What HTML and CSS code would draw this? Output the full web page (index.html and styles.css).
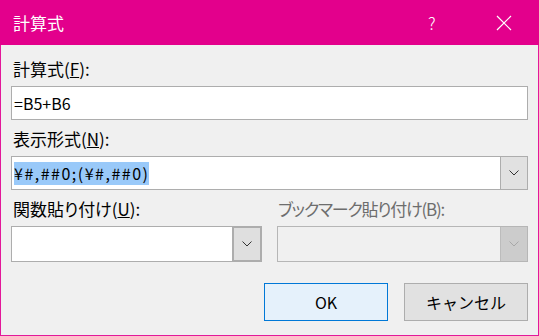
FILE: index.html
```html
<!DOCTYPE html>
<html lang="ja">
<head>
	<meta charset="UTF-8">
	<meta name="viewport" content="width=device-width, initial-scale=1.0">
	<title>計算式</title>
	<link rel="stylesheet" href="styles.css">
</head>
<body>
	<div class="dialog">
		<div class="titlebar">
			<span class="title">計算式</span>
			<span class="help">?</span>
			<span class="close">
				<svg width="16" height="16" viewBox="0 0 16 16">
					<path d="M1 1 L15 15 M15 1 L1 15" stroke="#fff" stroke-width="1.2" fill="none"/>
				</svg>
			</span>
		</div>

		<div class="content">
			<label class="field-label first">計算式(<u>F</u>):</label>
			<div class="textbox">=B5+B6</div>

			<label class="field-label">表示形式(<u>N</u>):</label>
			<div class="combo">
				<div class="combo-text"><span class="selected">¥#,##0;(¥#,##0)</span></div>
				<div class="combo-btn">
					<svg width="10" height="6" viewBox="0 0 10 6"><polyline points="0.5,0.5 5,5 9.5,0.5" stroke="#333" fill="none"/></svg>
				</div>
			</div>

			<div class="pair">
				<div class="col">
					<label class="field-label">関数貼り付け(<u>U</u>):</label>
					<div class="combo tall">
						<div class="combo-text"></div>
						<div class="combo-btn thick">
							<svg width="10" height="6" viewBox="0 0 10 6"><polyline points="0.5,0.5 5,5 9.5,0.5" stroke="#333" fill="none"/></svg>
						</div>
					</div>
				</div>
				<div class="col">
					<label class="field-label disabled">ブックマーク貼り付け(B):</label>
					<div class="combo tall off">
						<div class="combo-text"></div>
						<div class="combo-btn">
							<svg width="10" height="6" viewBox="0 0 10 6"><polyline points="0.5,0.5 5,5 9.5,0.5" stroke="#a8a8a8" fill="none"/></svg>
						</div>
					</div>
				</div>
			</div>

			<div class="buttons">
				<button class="btn default">OK</button>
				<button class="btn">キャンセル</button>
			</div>
		</div>
	</div>
</body>
</html>
```

FILE: styles.css
```css
body {
	margin: 0;
	font-family: "Noto Sans CJK JP", "Noto Sans", sans-serif;
	color: #000;
}

.dialog {
	width: 539px;
	height: 336px;
	box-sizing: border-box;
	background-color: #f0f0f0;
	border: 1px solid #e3189a;
	border-top: none;
}

.titlebar {
	height: 45px;
	margin: 0 -1px;
	background-color: #e3008c;
	color: #fff;
	display: flex;
	align-items: center;
	font-size: 17px;
}

.title {
	flex: 1;
	padding-left: 13px;
	padding-bottom: 1px;
}

.help {
	width: 14px;
	margin-right: 54px;
	font-size: 17px;
	font-weight: 300;
}

.close {
	display: flex;
	margin-right: 27px;
}

.content {
	padding: 5px 10px 0 10px;
}

.field-label {
	display: flex;
	align-items: center;
	height: 36px;
	font-size: 17px;
	line-height: 1;
	padding-left: 2px;
	font-feature-settings: "palt";
}

.field-label.disabled {
	color: #6d6d6d;
	letter-spacing: -1.2px;
}

.textbox {
	height: 34px;
	box-sizing: border-box;
	background-color: #fff;
	border: 1px solid #adadad;
	display: flex;
	align-items: center;
	padding-left: 2px;
	font-size: 16px;
}

.combo {
	height: 34px;
	box-sizing: border-box;
	display: flex;
	background-color: #fff;
	border: 1px solid #adadad;
}

.combo.tall {
	height: 36px;
}

.combo-text {
	flex: 1;
	display: flex;
	align-items: center;
	padding-left: 2px;
	font-size: 16px;
}

.selected {
	background-color: #99c9f9;
	line-height: 23px;
	letter-spacing: 1.5px;
}

.combo-btn {
	width: 26px;
	display: flex;
	align-items: center;
	justify-content: center;
	background-color: #e1e1e1;
	border-left: 1px solid #adadad;
}

.combo-btn.thick {
	border: 2px solid #adadad;
	margin: -1px -1px -1px 0;
	background-color: #dfdfdf;
}

.combo.off {
	background-color: #f0f0f0;
	border-color: #b6b6b6;
}

.combo.off .combo-btn {
	background-color: #cccccc;
	border-left-color: #bcbcbc;
}

.pair {
	display: grid;
	grid-template-columns: 1fr 1fr;
	gap: 15px;
}

.pair .col:last-child .field-label {
	padding-left: 1px;
}

.buttons {
	display: flex;
	justify-content: flex-end;
	gap: 16px;
	margin-top: 21px;
}

.btn {
	width: 124px;
	height: 38px;
	font-family: inherit;
	font-size: 16px;
	color: #000;
	background-color: #e1e1e1;
	border: 1px solid #adadad;
	padding: 0;
}

.btn.default {
	background-color: #e5f1fb;
	border-color: #0078d7;
}
```
